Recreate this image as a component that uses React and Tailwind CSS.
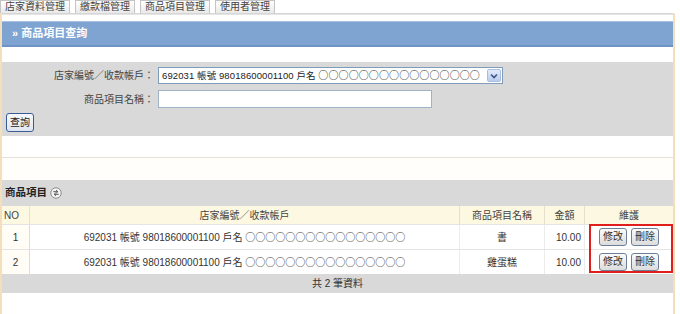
import React from "react";

const FONT = "font-['Liberation_Sans','Noto_Sans_CJK_TC',sans-serif]";
const OS = "○○○○○○○○○○○○○○○○";

function Tab({ label }) {
  return (
    <div className="h-[13px] px-[4px] flex items-center border-x border-t border-[#c4c4c4] bg-gradient-to-b from-white to-[#e9e9e9] text-[#444] leading-none">
      {label}
    </div>
  );
}

function SmallButton({ label }) {
  return (
    <div className="w-[28px] h-[18px] flex items-center justify-center border border-[#6d8099] rounded-[3px] bg-gradient-to-b from-[#fbfbfb] to-[#dcdcdc] text-[#333] leading-none">
      {label}
    </div>
  );
}

function Account({ className }) {
  return (
    <span className={className}>
      692031 帳號 98018600001100 戶名{" "}
      <span className="font-['Noto_Sans_CJK_TC',sans-serif] text-[10px]">{OS}</span>
    </span>
  );
}

export default function App() {
  const rows = [
    { no: 1, name: "書", amount: "10.00" },
    { no: 2, name: "雞蛋糕", amount: "10.00" },
  ];

  return (
    <div className={`w-[680px] h-[314px] bg-white overflow-hidden text-[10px] text-[#333] ${FONT}`}>
      {/* Tabs */}
      <div className="flex gap-[5px] h-[13px]">
        <Tab label="店家資料管理" />
        <Tab label="繳款檔管理" />
        <Tab label="商品項目管理" />
        <Tab label="使用者管理" />
      </div>

      <div className="w-[675px] h-[301px] border-x-2 border-[#f4dfbd]">
        <div className="h-[2px] bg-gradient-to-b from-[#cfcfcf] to-[#ececec]" />

        {/* Title bar */}
        <div className="pt-[6px]">
          <div className="h-[26px] flex items-center pl-[10px] bg-[#80a4d2] border-t border-[#a9c2e4] border-b-2 border-b-[#6f93c4] text-white font-bold text-[11px]">
            » 商品項目查詢
          </div>
        </div>

        <div className="h-[15px]" />

        {/* Search form */}
        <div className="h-[74px] bg-[#d9d9d9] pt-[5px]">
          <div className="flex items-center h-[17px]">
            <div className="w-[152px] text-right text-[#444]">店家編號／收款帳戶：</div>
            <div className="ml-[4px] w-[345px] h-[17px] flex items-center justify-between border border-[#7f9db9] bg-white pl-[3px] pr-[1px]">
              <Account className="text-[9.5px] text-[#222] whitespace-nowrap tracking-[0.1px]" />
              <div className="w-[14px] h-[13px] flex items-center justify-center border border-[#a9bde0] bg-gradient-to-b from-[#e2ebfa] to-[#b9cbee] rounded-[2px]">
                <svg width="8" height="6" viewBox="0 0 8 6">
                  <path d="M1 1.5 L4 4.5 L7 1.5" fill="none" stroke="#3e5584" strokeWidth="1.6" />
                </svg>
              </div>
            </div>
          </div>
          <div className="flex items-center h-[18px] mt-[6px]">
            <div className="w-[152px] text-right text-[#444]">商品項目名稱：</div>
            <div className="ml-[4px] w-[274px] h-[18px] border border-[#9fb2c6] bg-white" />
          </div>
          <div className="mt-[5px] pl-[4px]">
            <div className="w-[28px] h-[19px] flex items-center justify-center border border-[#3b5b97] rounded-[3px] bg-gradient-to-b from-[#f6f8fc] to-[#dfe5f1] text-[#222] leading-none">
              查詢
            </div>
          </div>
        </div>

        <div className="h-[21px]" />
        <div className="h-[23px] border-t border-[#e6e1d6] bg-[#fffefb]" />

        {/* Section header */}
        <div className="h-[26px] bg-[#d9d9d9] flex items-center pl-[3px] gap-[3px]">
          <span className="font-bold text-[10.5px] text-[#222]">商品項目</span>
          <svg width="12" height="12" viewBox="0 0 11 11">
            <circle cx="5.5" cy="5.5" r="4.8" fill="#f4f4f4" stroke="#8a8a8a" strokeWidth="0.9" />
            <path d="M3 4.3 H7 M5.6 2.9 L7.2 4.3 L5.6 5.7" fill="none" stroke="#555" strokeWidth="0.9" />
            <path d="M8 6.7 H4 M5.4 5.3 L3.8 6.7 L5.4 8.1" fill="none" stroke="#555" strokeWidth="0.9" />
          </svg>
        </div>

        {/* Table */}
        <div className="relative">
          <div className="grid grid-cols-[28px_430px_85px_40px_88px] h-[18px] bg-[#fcf8e1] text-[#444]">
            <div className="flex items-center pl-[2px] border-r border-[#e6e1cc]">NO</div>
            <div className="flex items-center justify-center border-r border-[#e6e1cc]">店家編號／收款帳戶</div>
            <div className="flex items-center justify-center border-r border-[#e6e1cc]">商品項目名稱</div>
            <div className="flex items-center justify-center border-r border-[#e6e1cc]">金額</div>
            <div className="flex items-center justify-center">維護</div>
          </div>
          {rows.map((r) => (
            <div
              key={r.no}
              className="grid grid-cols-[28px_430px_85px_40px_88px] h-[25px] bg-white border-t border-[#e4e4e4] text-[#333]"
            >
              <div className="flex items-center justify-center bg-[#fffdf6] border-r border-[#dcdcdc]">{r.no}</div>
              <div className="flex items-center justify-center border-r border-[#ececec]">
                <Account className="whitespace-nowrap" />
              </div>
              <div className="flex items-center justify-center border-r border-[#ececec]">{r.name}</div>
              <div className="flex items-center justify-end pr-[3px] border-r border-[#ececec]">{r.amount}</div>
              <div className="flex items-center justify-center gap-[4px]">
                <SmallButton label="修改" />
                <SmallButton label="刪除" />
              </div>
            </div>
          ))}
          <div className="h-[19px] bg-[#d9d9d9] flex items-center justify-center text-[#333]">
            共 2 筆資料
          </div>

          {/* highlight annotation */}
          <div className="absolute left-[587px] top-[18px] w-[84px] h-[49px] border-2 border-[#e01e1e]" />
        </div>
      </div>
    </div>
  );
}
